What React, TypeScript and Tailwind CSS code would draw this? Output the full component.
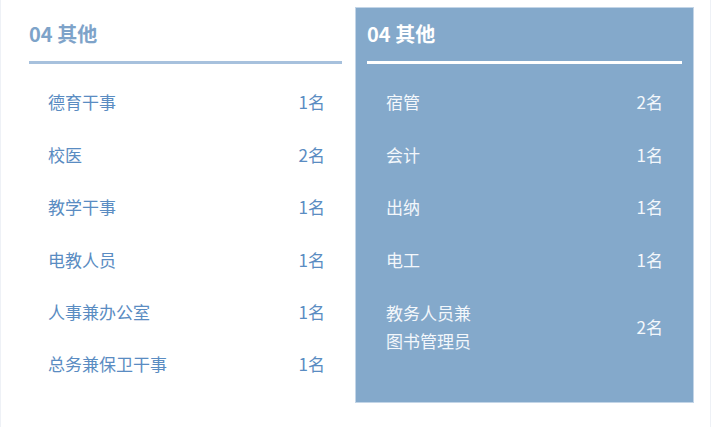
const left = [
  { name: '德育干事', count: '1名' },
  { name: '校医', count: '2名' },
  { name: '教学干事', count: '1名' },
  { name: '电教人员', count: '1名' },
  { name: '人事兼办公室', count: '1名' },
  { name: '总务兼保卫干事', count: '1名' },
]

const right = [
  { name: '宿管', count: '2名' },
  { name: '会计', count: '1名' },
  { name: '出纳', count: '1名' },
  { name: '电工', count: '1名' },
]

export default function App() {
  return (
    <div
      className="w-[711px] h-[427px] bg-white border-x border-[#eef1f6] overflow-hidden"
      style={{ fontFamily: '"Noto Sans CJK SC", "Noto Sans", sans-serif' }}
    >
      <div className="flex pt-[7px] pl-[15px]">
        {/* Left column */}
        <div className="w-[339px] px-[13px]">
          <h2 className="pt-[14px] text-[20px] leading-[26px] font-bold text-[#7ea3c9]">04 其他</h2>
          <div className="mt-[14px] h-[3px] bg-[#a7c1dd]" />
          <ul className="mt-[12px] pl-[19px] pr-[17px] text-[17px] text-[#5a8cc2]">
            {left.map((r) => (
              <li key={r.name} className="h-[52.4px] flex items-center justify-between">
                <span>{r.name}</span>
                <span>{r.count}</span>
              </li>
            ))}
          </ul>
        </div>

        {/* Right panel */}
        <div className="w-[339px] h-[396px] bg-[#84a9cb] border border-[#c3d5e7] px-[11px] text-white">
          <h2 className="pt-[13px] text-[20px] leading-[26px] font-bold">04 其他</h2>
          <div className="mt-[14px] h-[3px] bg-white" />
          <ul className="mt-[12px] px-[19px] text-[17px] text-[#f3f7fb]">
            {right.map((r) => (
              <li key={r.name} className="h-[52.4px] flex items-center justify-between">
                <span>{r.name}</span>
                <span>{r.count}</span>
              </li>
            ))}
            <li className="h-[82px] flex items-center justify-between">
              <span className="leading-[28px]">
                教务人员兼
                <br />
                图书管理员
              </span>
              <span>2名</span>
            </li>
          </ul>
        </div>
      </div>
    </div>
  )
}
